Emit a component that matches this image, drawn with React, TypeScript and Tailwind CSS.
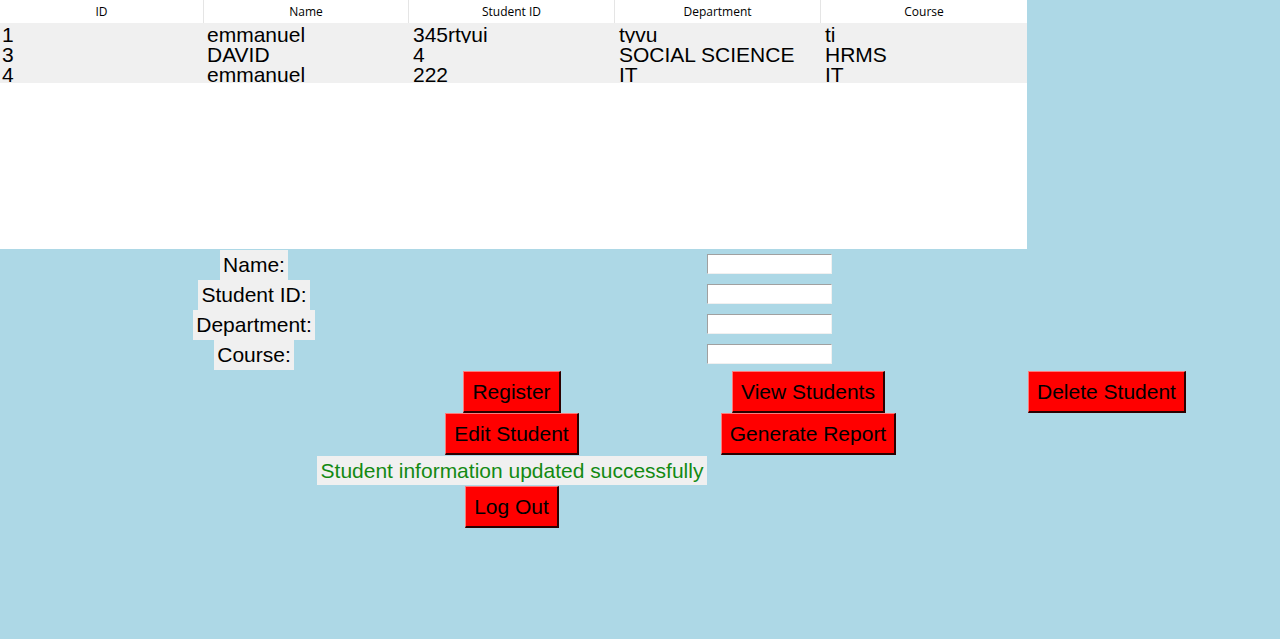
import React from 'react'

const columns = ['ID', 'Name', 'Student ID', 'Department', 'Course']

const students = [
  ['1', 'emmanuel', '345rtyui', 'tyvu', 'ti'],
  ['3', 'DAVID', '4', 'SOCIAL SCIENCE', 'HRMS'],
  ['4', 'emmanuel', '222', 'IT', 'IT'],
]

const labels = ['Name:', 'Student ID:', 'Department:', 'Course:']
const rowStarts = ['row-start-1', 'row-start-2', 'row-start-3', 'row-start-4']

const arial = { fontFamily: '"Liberation Sans", Arial, sans-serif' }

function TkButton({ children, className = '' }: { children: React.ReactNode; className?: string }) {
  return (
    <button
      className={`flex h-[42px] items-center justify-center whitespace-nowrap border-t border-l border-b-2 border-r-2 border-t-[#ff7a7a] border-l-[#ff7a7a] border-b-[#2a0000] border-r-[#2a0000] bg-[#ff0000] px-[8px] text-[21px] leading-[24px] text-black ${className}`}
      style={arial}
    >
      {children}
    </button>
  )
}

export default function App() {
  return (
    <div className="min-h-[639px] w-full bg-[#add8e6]">
      <div className="h-[249px] w-[1027px] bg-white">
        <div
          className="grid h-[23px] grid-cols-[204px_205px_206px_206px_1fr] bg-white"
          style={{ fontFamily: '"Open Sans", "Noto Sans", sans-serif' }}
        >
          {columns.map((col, i) => (
            <div
              key={col}
              className={`flex items-center justify-center text-[12px] text-black ${i < 4 ? 'border-r border-[#e5e5e5]' : ''}`}
            >
              {col}
            </div>
          ))}
        </div>
        <div className="bg-[#f0f0f0]" style={arial}>
          {students.map((row) => (
            <div key={row[0]} className="grid h-[20px] grid-cols-[204px_206px_206px_206px_1fr] overflow-hidden">
              {row.map((cell, i) => (
                <div
                  key={i}
                  className={`whitespace-nowrap text-[21px] leading-[24px] text-black ${i === 0 ? 'pl-[2px]' : 'pl-[3px]'}`}
                >
                  {cell}
                </div>
              ))}
            </div>
          ))}
        </div>
      </div>

      <div
        className="mt-[1px] grid grid-cols-[192px_124px_392px_201px_119px_auto] grid-rows-[30px_30px_30px_31px_42px_42px_31px_42px]"
        style={arial}
      >
        {labels.map((label, i) => (
          <React.Fragment key={label}>
            <div
              className={`col-start-2 flex h-[30px] items-center justify-self-center self-start whitespace-nowrap bg-[#f0f0f0] px-[3px] text-[21px] text-black ${rowStarts[i]}`}
            >
              {label}
            </div>
            <input
              className={`col-start-4 ml-[-1px] mt-[4px] h-[20px] w-[125px] self-start justify-self-start border border-t-[#a0a0a0] border-l-[#a0a0a0] border-b-[#f0f0f0] border-r-[#f0f0f0] bg-white outline-none ${rowStarts[i]}`}
            />
          </React.Fragment>
        ))}

        <TkButton className="col-start-3 row-start-5 justify-self-center">Register</TkButton>
        <TkButton className="col-start-4 row-start-5 justify-self-center">View Students</TkButton>
        <TkButton className="col-start-6 row-start-5 justify-self-start">Delete Student</TkButton>

        <TkButton className="col-start-3 row-start-6 justify-self-center">Edit Student</TkButton>
        <TkButton className="col-start-4 row-start-6 justify-self-center">Generate Report</TkButton>

        <div className="col-start-3 row-start-7 mt-[1px] flex h-[29px] items-center justify-self-center self-start whitespace-nowrap bg-[#f0f0f0] px-[4px] text-[21px] text-[#138a13]">
          Student information updated successfully
        </div>

        <TkButton className="col-start-3 row-start-8 justify-self-center">Log Out</TkButton>
      </div>
    </div>
  )
}
